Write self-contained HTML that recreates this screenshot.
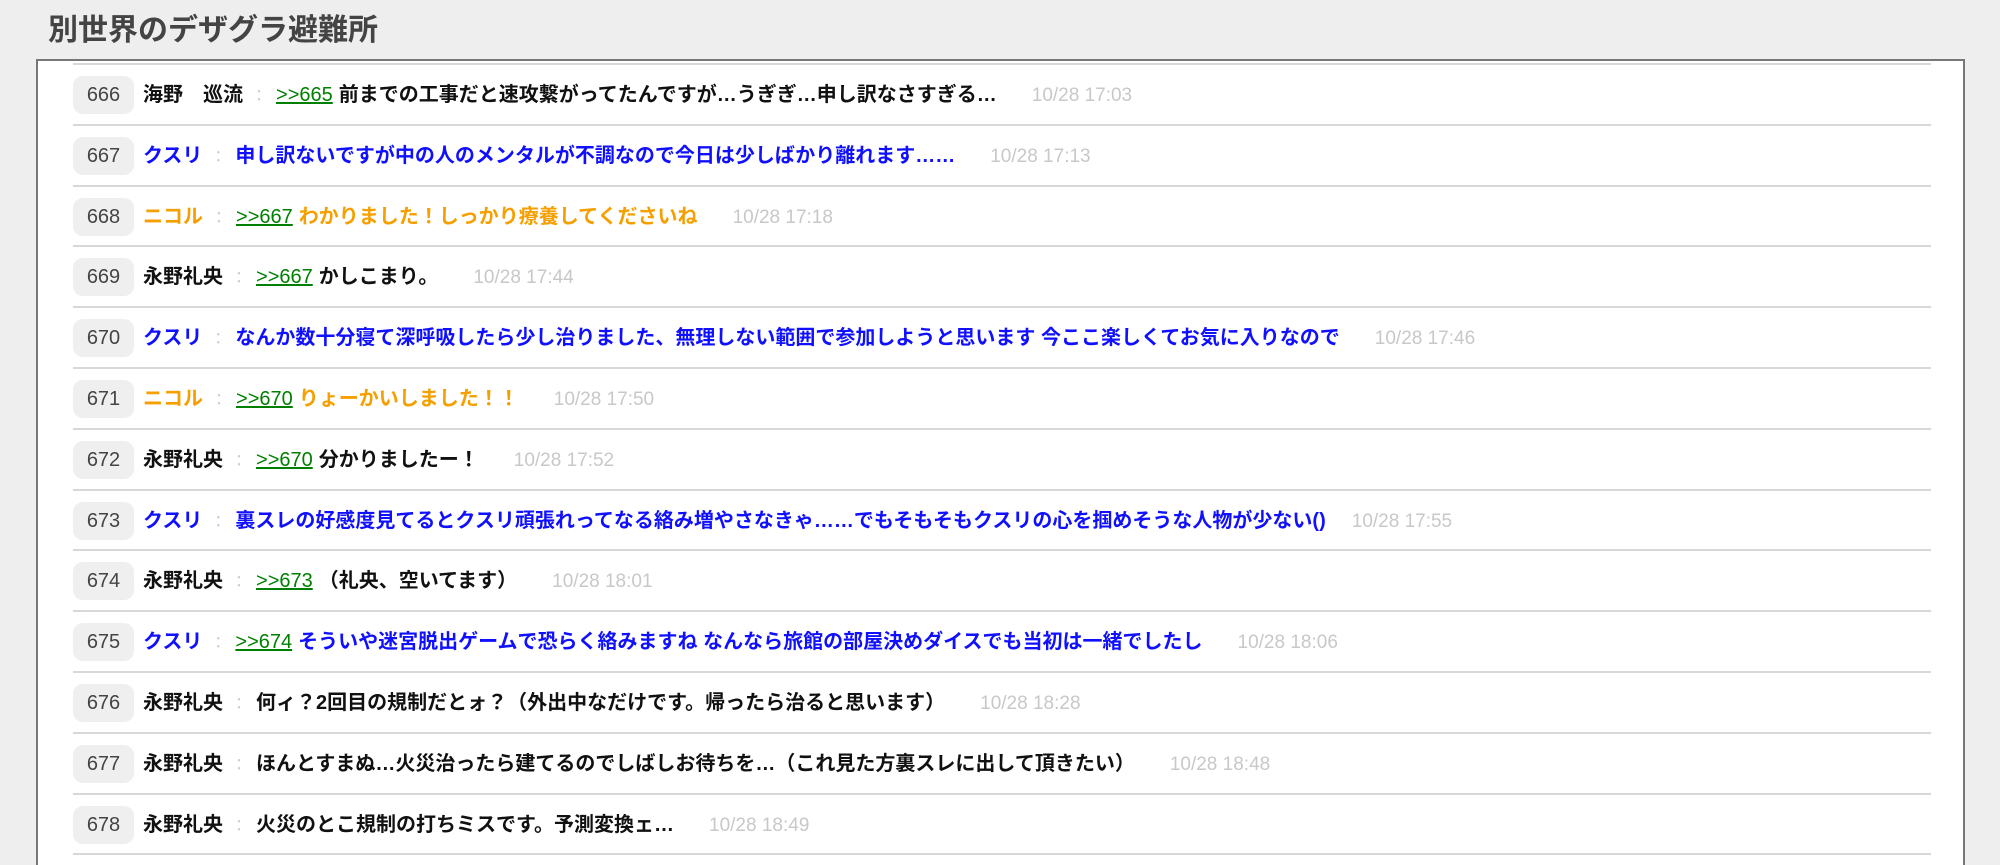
<!DOCTYPE html>
<html><head><meta charset="utf-8"><style>
html,body{margin:0;padding:0;overflow:hidden;height:865px}
body{width:2000px;background:#eeeeee;font-family:"Liberation Sans","Noto Sans CJK JP",sans-serif;position:relative}
h1{position:absolute;left:48px;top:11px;margin:0;font-size:30px;font-weight:bold;color:#444;line-height:40px}
.box{position:absolute;left:36px;top:59px;width:1925px;height:804px;background:#fff;border:2px solid #777;border-bottom:none;overflow:hidden}
.row{position:absolute;left:35px;width:1858px;height:58.8px;border-top:2px solid #d8d8d8;display:flex;align-items:baseline;font-size:20px;font-weight:bold;white-space:nowrap}
.row>span,.row>a{line-height:20px}
.n{display:inline-flex;width:61px;height:38px;margin-top:11px;background:#efefef;border-radius:10px;color:#444;font-weight:normal;font-size:20px;align-items:center;justify-content:center;margin-right:9px}
.c{color:#ccc;font-weight:normal;margin:0 9px 0 8px;font-size:16px}
a{color:#008000;font-weight:normal;text-decoration:underline;margin-right:6px}
.t{color:#c8c8c8;font-weight:normal;font-size:19px;margin-left:35px}
.b{color:#1010ff}.o{color:#f5a000}.k{color:#111}
</style></head><body>
<h1>別世界のデザグラ避難所</h1>
<div class="box">
<div class="row" style="top:2px"><span class="n">666</span><span class="k">海野　巡流</span><span class="c">：</span><a>&gt;&gt;665</a><span class="k">前までの工事だと速攻繋がってたんですが…うぎぎ…申し訳なさすぎる…</span><span class="t">10/28 17:03</span></div>
<div class="row b" style="top:62.8px"><span class="n">667</span><span>クスリ</span><span class="c">：</span><span>申し訳ないですが中の人のメンタルが不調なので今日は少しばかり離れます……</span><span class="t">10/28 17:13</span></div>
<div class="row o" style="top:123.6px"><span class="n">668</span><span>ニコル</span><span class="c">：</span><a>&gt;&gt;667</a><span>わかりました！しっかり療養してくださいね</span><span class="t">10/28 17:18</span></div>
<div class="row k" style="top:184.4px"><span class="n">669</span><span>永野礼央</span><span class="c">：</span><a>&gt;&gt;667</a><span>かしこまり。</span><span class="t">10/28 17:44</span></div>
<div class="row b" style="top:245.2px"><span class="n">670</span><span>クスリ</span><span class="c">：</span><span>なんか数十分寝て深呼吸したら少し治りました、無理しない範囲で参加しようと思います 今ここ楽しくてお気に入りなので</span><span class="t">10/28 17:46</span></div>
<div class="row o" style="top:306px"><span class="n">671</span><span>ニコル</span><span class="c">：</span><a>&gt;&gt;670</a><span>りょーかいしました！！</span><span class="t">10/28 17:50</span></div>
<div class="row k" style="top:366.8px"><span class="n">672</span><span>永野礼央</span><span class="c">：</span><a>&gt;&gt;670</a><span>分かりましたー！</span><span class="t">10/28 17:52</span></div>
<div class="row b" style="top:427.6px"><span class="n">673</span><span>クスリ</span><span class="c">：</span><span>裏スレの好感度見てるとクスリ頑張れってなる絡み増やさなきゃ……でもそもそもクスリの心を掴めそうな人物が少ない()</span><span class="t" style="margin-left:26px">10/28 17:55</span></div>
<div class="row k" style="top:488.4px"><span class="n">674</span><span>永野礼央</span><span class="c">：</span><a>&gt;&gt;673</a><span>（礼央、空いてます）</span><span class="t">10/28 18:01</span></div>
<div class="row b" style="top:549.2px"><span class="n">675</span><span>クスリ</span><span class="c">：</span><a>&gt;&gt;674</a><span>そういや迷宮脱出ゲームで恐らく絡みますね なんなら旅館の部屋決めダイスでも当初は一緒でしたし</span><span class="t">10/28 18:06</span></div>
<div class="row k" style="top:610px"><span class="n">676</span><span>永野礼央</span><span class="c">：</span><span>何ィ？2回目の規制だとォ？（外出中なだけです。帰ったら治ると思います）</span><span class="t">10/28 18:28</span></div>
<div class="row k" style="top:670.8px"><span class="n">677</span><span>永野礼央</span><span class="c">：</span><span>ほんとすまぬ…火災治ったら建てるのでしばしお待ちを…（これ見た方裏スレに出して頂きたい）</span><span class="t">10/28 18:48</span></div>
<div class="row k" style="top:731.6px"><span class="n">678</span><span>永野礼央</span><span class="c">：</span><span>火災のとこ規制の打ちミスです。予測変換ェ…</span><span class="t">10/28 18:49</span></div>
<div style="position:absolute;left:35px;top:792.4px;width:1858px;border-top:2px solid #d8d8d8"></div>
</div>
</body></html>
